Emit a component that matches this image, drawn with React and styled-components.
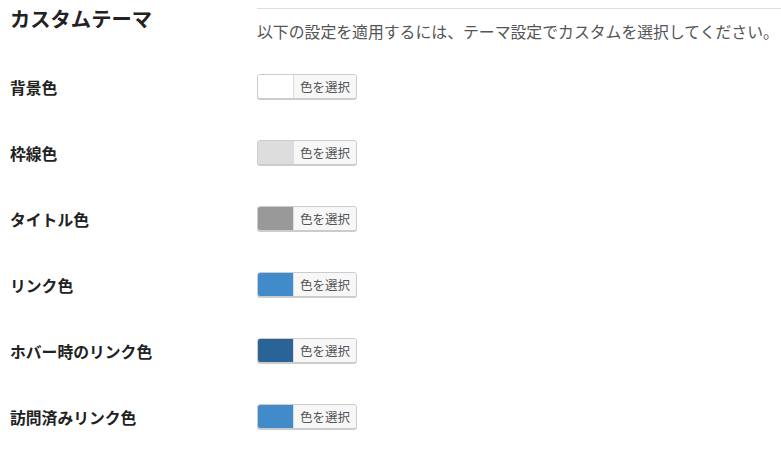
import React from 'react'
import styled, { createGlobalStyle } from 'styled-components'

const GlobalStyle = createGlobalStyle`
  body {
    margin: 0;
    background: #fff;
    font-family: "Noto Sans CJK JP", "Noto Sans", sans-serif;
  }
`

const Page = styled.div`
  width: 781px;
  height: 456px;
  overflow: hidden;
  background: #fff;
`

const Header = styled.div`
  display: grid;
  grid-template-columns: 257px 1fr;
  height: 55px;
`

const Title = styled.h2`
  margin: 0;
  padding: 5px 0 0 10px;
  font-size: 20.3px;
  line-height: 26px;
  font-weight: 700;
  color: #222;
`

const Intro = styled.div`
  margin-top: 8px;
  border-top: 1px solid #dedede;
  padding-top: 12px;
`

const Description = styled.p`
  margin: 0;
  font-size: 15.85px;
  line-height: 22px;
  color: #555;
  white-space: nowrap;
`

const Row = styled.div`
  display: grid;
  grid-template-columns: 257px auto;
  align-items: center;
  height: 66px;
`

const Label = styled.span`
  padding-left: 10px;
  font-size: 15.8px;
  line-height: 20px;
  font-weight: 700;
  color: #222;
`

const PickerCell = styled.div`
  padding-bottom: 4px;
`

const PickerButton = styled.button`
  display: flex;
  align-items: stretch;
  width: 100px;
  height: 25px;
  padding: 0;
  border: 1px solid #ccc;
  border-radius: 3px;
  background: #f7f7f7;
  box-shadow: 0 1px 0 #ccc;
  overflow: hidden;
  cursor: pointer;
`

const Swatch = styled.span`
  width: 35px;
  flex: none;
  background: ${props => props.color};
  border-right: 1px solid #ddd;
`

const PickerText = styled.span`
  flex: 1;
  display: flex;
  align-items: center;
  justify-content: center;
  background: #f7f7f7;
  font-family: "Noto Sans CJK JP", sans-serif;
  font-size: 12.5px;
  color: #555;
`

const settings = [
  { label: '背景色', color: '#ffffff' },
  { label: '枠線色', color: '#dddddd' },
  { label: 'タイトル色', color: '#999999' },
  { label: 'リンク色', color: '#428bca' },
  { label: 'ホバー時のリンク色', color: '#2a6496' },
  { label: '訪問済みリンク色', color: '#428bca' },
]

const App = () =>
  <Page>
    <GlobalStyle />
    <Header>
      <Title>カスタムテーマ</Title>
      <Intro>
        <Description>以下の設定を適用するには、テーマ設定でカスタムを選択してください。</Description>
      </Intro>
    </Header>
    {settings.map(s =>
      <Row key={s.label}>
        <Label>{s.label}</Label>
        <PickerCell>
          <PickerButton type="button">
            <Swatch color={s.color} />
            <PickerText>色を選択</PickerText>
          </PickerButton>
        </PickerCell>
      </Row>
    )}
  </Page>

export default App
